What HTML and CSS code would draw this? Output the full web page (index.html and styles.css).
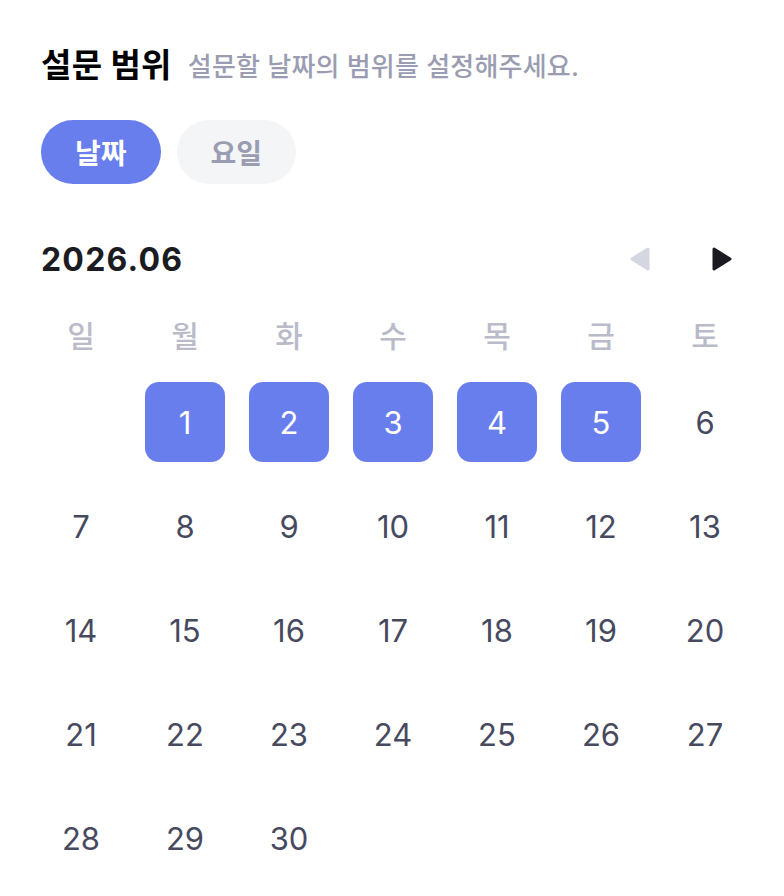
FILE: index.html
```html
<!DOCTYPE html>
<html lang="ko">
<head>
    <meta charset="UTF-8">
    <meta name="viewport" content="width=device-width, initial-scale=1.0">
    <title>설문 범위</title>
    <link rel="stylesheet" href="styles.css">
</head>
<body>
<div class="range-panel">
    <div class="title-row">
        <h2>설문 범위</h2>
        <span class="hint">설문할 날짜의 범위를 설정해주세요.</span>
    </div>

    <div class="tabs">
        <button class="tab active">날짜</button>
        <button class="tab">요일</button>
    </div>

    <div class="month-row">
        <div class="month">2026.06</div>
        <div class="month-nav">
            <button class="nav-btn disabled">
                <svg width="24" height="26" viewBox="0 0 24 26"><path d="M20 3 L4 13 L20 23 Z" fill="currentColor" stroke="currentColor" stroke-width="3" stroke-linejoin="round"/></svg>
            </button>
            <button class="nav-btn">
                <svg width="24" height="26" viewBox="0 0 24 26"><path d="M4 3 L20 13 L4 23 Z" fill="currentColor" stroke="currentColor" stroke-width="3" stroke-linejoin="round"/></svg>
            </button>
        </div>
    </div>

    <div class="weekdays">
        <div>일</div><div>월</div><div>화</div><div>수</div><div>목</div><div>금</div><div>토</div>
    </div>

    <div class="days" id="days"></div>
</div>

<script>
    // 2026년 6월: 1일이 월요일
    var selected = [1, 2, 3, 4, 5];
    var html = '<div class="day empty"></div>';
    for (var d = 1; d <= 30; d++) {
        var cls = selected.indexOf(d) >= 0 ? 'day selected' : 'day';
        html += '<div class="' + cls + '">' + d + '</div>';
    }
    document.getElementById('days').innerHTML = html;
</script>
</body>
</html>
```

FILE: styles.css
```css
body {
    margin: 0;
    background: white;
    font-family: Inter, "Noto Sans CJK KR", sans-serif;
    color: #1b1c22;
}
.range-panel {
    width: 704px;
    padding: 41px 0 0 41px;
}
.title-row {
    display: flex;
    align-items: center;
    gap: 16px;
    height: 44px;
}
.title-row h2 {
    margin: 0;
    font-size: 33px;
    font-weight: 700;
    color: #000;
    letter-spacing: 0.3px;
}
.hint {
    font-size: 26px;
    font-weight: 500;
    color: #9a9db1;
    margin-top: 3px;
    letter-spacing: 0.2px;
}
.tabs {
    display: flex;
    gap: 16px;
    margin-top: 35px;
}
.tab {
    height: 64px;
    padding: 0 34px;
    border: none;
    border-radius: 32px;
    background: #f4f5f7;
    color: #9a9db1;
    font-family: inherit;
    font-size: 28px;
    font-weight: 700;
}
.tab.active {
    background: #687eed;
    color: white;
}
.month-row {
    display: flex;
    justify-content: space-between;
    align-items: center;
    height: 40px;
    margin-top: 55px;
}
.month {
    font-size: 32px;
    font-weight: 700;
    letter-spacing: 1.2px;
}
.month-nav {
    display: flex;
    gap: 58px;
    margin-right: 11px;
}
.nav-btn {
    width: 24px;
    height: 26px;
    padding: 0;
    border: none;
    background: none;
    color: #1b1c22;
    display: flex;
}
.nav-btn.disabled {
    color: #d4d6e0;
}
.weekdays,
.days {
    display: grid;
    grid-template-columns: repeat(7, 80px);
    column-gap: 24px;
}
.weekdays {
    margin-top: 31px;
    height: 48px;
    align-items: center;
}
.weekdays div {
    text-align: center;
    font-size: 30px;
    font-weight: 500;
    color: #b9bbc9;
}
.days {
    margin-top: 24px;
    row-gap: 24px;
}
.day {
    height: 80px;
    display: flex;
    align-items: center;
    justify-content: center;
    font-size: 31px;
    color: #474a5f;
    border-radius: 14px;
}
.day.selected {
    background: #687eed;
    color: white;
}
```
